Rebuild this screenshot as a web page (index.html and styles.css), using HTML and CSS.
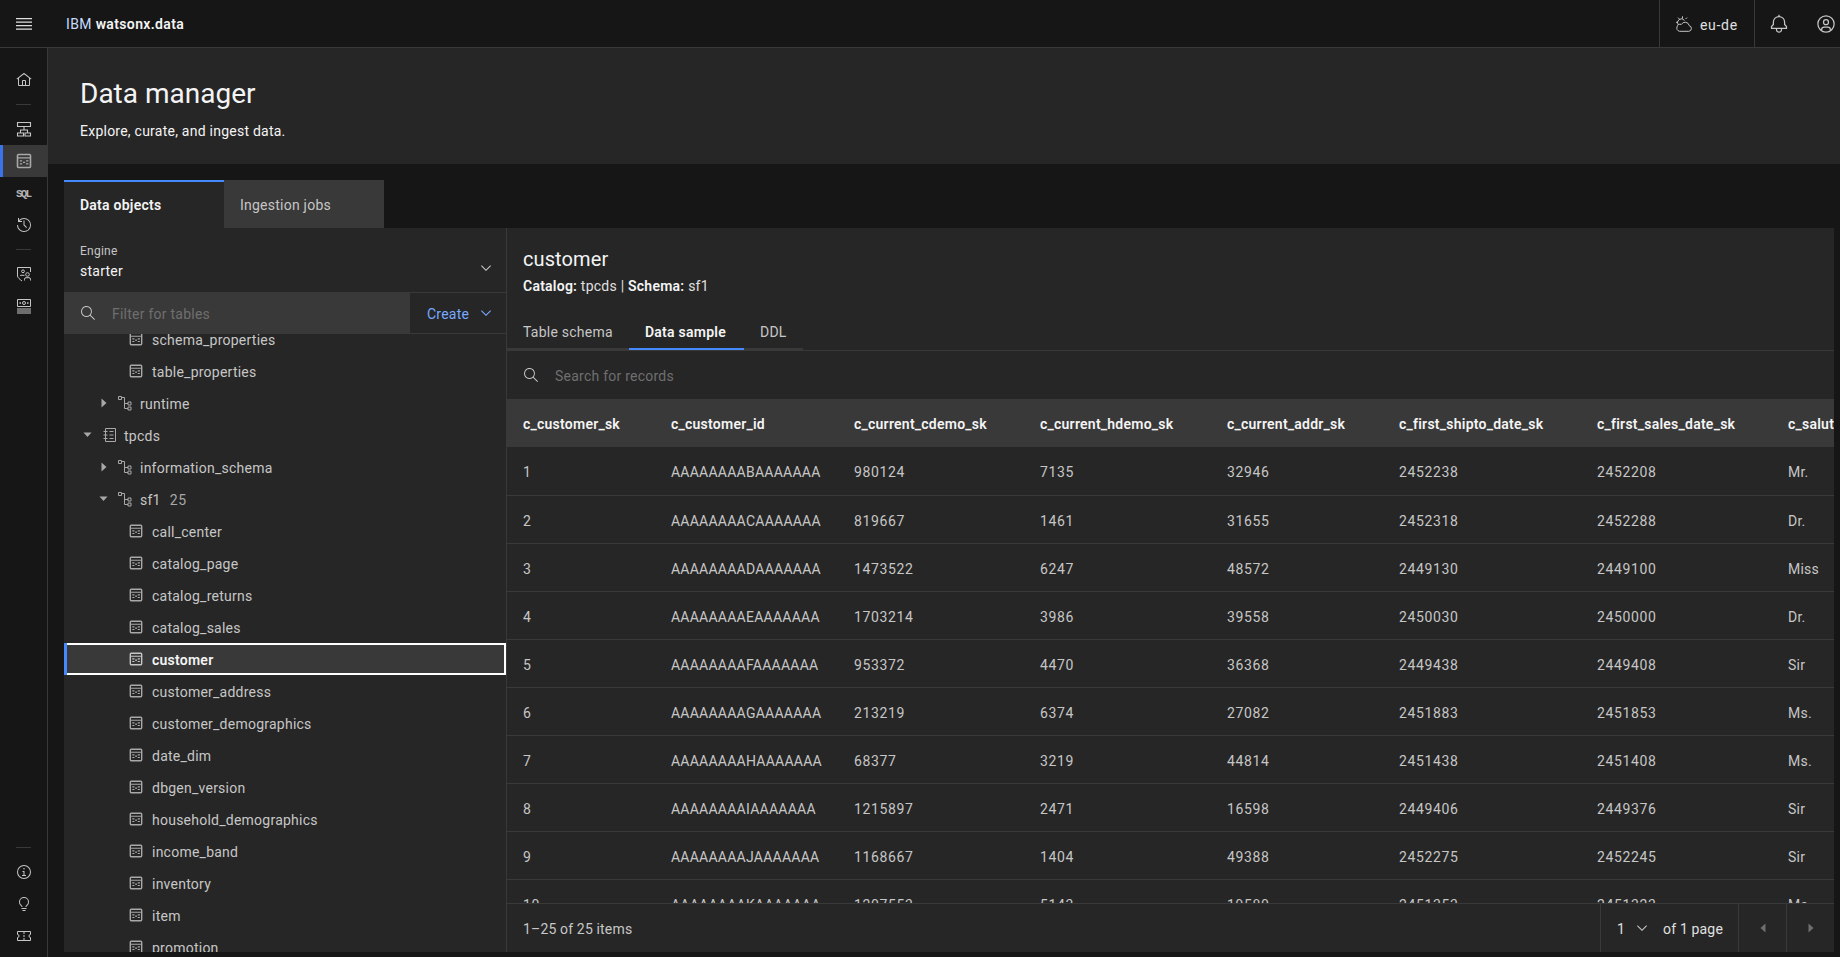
FILE: index.html
```html
<!DOCTYPE html>
<html lang="en">
<head>
<meta charset="utf-8">
<title>Data manager - IBM watsonx.data</title>
<link rel="stylesheet" href="styles.css">
</head>
<body>
<svg class="defs" aria-hidden="true">
  <symbol id="tbl" viewBox="0 0 16 16"><path fill-rule="evenodd" d="M2.500 .7h11a1.800 1.800 0 0 1 1.800 1.800v11a1.800 1.800 0 0 1-1.800 1.800h-11a1.800 1.800 0 0 1-1.800-1.800v-11A1.800 1.800 0 0 1 2.500 .7zM2.300 2.300v1.900h11.400V2.300zM2.300 5.400v8.300h11.400V5.400z"/><path d="M3.800 7.200h2.400v1.300H3.800zM3.800 10.200h2.400v1.300H3.800zM7 8.700h2.200V10H7zM10 7.200h2.400v1.300H10zM10 10.200h2.400v1.300H10z"/></symbol>
  <symbol id="tree" viewBox="0 0 16 16"><path fill="none" stroke="currentColor" d="M1.500 1.500h3v3h-3zM4.500 2.500H7.500V13.500H11M7.500 8.500H11M11 7h3v3h-3zM11 12h3v3h-3z"/></symbol>
  <symbol id="book" viewBox="0 0 16 16"><path fill="none" stroke="currentColor" d="M3.500 1.500h10v13h-10zM1.500 4.500h4M1.500 8h4M1.500 11.500h4M7.500 4.500h4M7.500 8h4M7.500 11.500h4"/></symbol>
  <symbol id="caret-r" viewBox="0 0 16 16"><path d="M5.500 3.500 10.500 8l-5 4.500z"/></symbol>
  <symbol id="caret-l" viewBox="0 0 16 16"><path d="M10.500 3.500 5.500 8l5 4.500z"/></symbol>
  <symbol id="caret-d" viewBox="0 0 16 16"><path d="M3.500 5.500h8l-4 4.500z"/></symbol>
  <symbol id="chev" viewBox="0 0 16 16"><path d="M8 11L3 6 3.700 5.300 8 9.600 12.300 5.300 13 6z"/></symbol>
  <symbol id="search" viewBox="0 0 16 16"><path d="M15,14.300L10.700,10c1.900-2.300,1.600-5.800-0.700-7.700S4.200,0.700,2.300,3S0.700,8.800,3,10.700c2,1.700,5,1.700,7,0l4.300,4.300L15,14.300z M2,6.500C2,4,4,2,6.500,2S11,4,11,6.500S9,11,6.500,11S2,9,2,6.500z"/></symbol>
  <symbol id="home" viewBox="0 0 32 32"><path d="M16.612 2.214a1.010 1.010 0 0 0-1.242 0L1 13.419l1.243 1.572L4 13.621V26a2.004 2.004 0 0 0 2 2h20a2.004 2.004 0 0 0 2-2V13.630L29.757 15 31 13.428zM18 26h-4v-8h4zm2 0v-8a2.002 2.002 0 0 0-2-2h-4a2.002 2.002 0 0 0-2 2v8H6V12.062l10-7.790 10 7.800V26z"/></symbol>
  <symbol id="deploy" viewBox="0 0 16 16"><path fill="none" stroke="currentColor" stroke-width="1.100" d="M1.500 1.500h13v4h-13zM8 5.500V9M4.500 12V9h7v3M1.500 12h6v3h-6zM9 12h5.500v3H9z"/></symbol>
  <symbol id="hist" viewBox="0 0 32 32"><path d="M20.590 22 15 16.410V7h2v8.580l5 5.010L20.590 22z"/><path d="M16 2A13.940 13.940 0 0 0 6 6.230V2H4v8h8V8H7.080A12 12 0 1 1 4 16H2A14 14 0 1 0 16 2z"/></symbol>
  <symbol id="shield" viewBox="0 0 16 16"><path fill="none" stroke="currentColor" d="M14.500 6V1.500h-13v8.500c0 1.500 2.500 3.500 4.500 5"/><circle cx="7" cy="5.300" r="1.400" fill="none" stroke="currentColor"/><path fill="none" stroke="currentColor" d="M4.500 10V9.300h4"/><circle cx="11.500" cy="8.500" r="1.800" fill="none" stroke="currentColor"/><path fill="none" stroke="currentColor" d="M8.500 14.500v-1.300a1.500 1.500 0 0 1 1.500-1.500h3a1.500 1.500 0 0 1 1.500 1.500v1.300"/></symbol>
  <symbol id="cash" viewBox="0 0 16 16"><path fill="none" stroke="currentColor" d="M1.500 1.500h13v7h-13zM1 11h14M1 13h14M1 15h14"/><circle cx="8" cy="5" r="1.500" fill="none" stroke="currentColor"/><path d="M3.500 4.200h1.500v1.600H3.500zM11 4.200h1.500v1.600H11z"/></symbol>
  <symbol id="info" viewBox="0 0 32 32"><path d="M17 22v-8h-4v2h2v6h-3v2h8v-2zM16 8a1.500 1.500 0 1 0 1.500 1.500A1.500 1.500 0 0 0 16 8z"/><path d="M16 30a14 14 0 1 1 14-14 14 14 0 0 1-14 14zm0-26a12 12 0 1 0 12 12A12 12 0 0 0 16 4z"/></symbol>
  <symbol id="idea" viewBox="0 0 32 32"><path d="M11 24h10v2H11zM13 28h6v2h-6zM16 2A10 10 0 0 0 6 12a9.190 9.190 0 0 0 3.460 7.620c1 .930 1.540 1.460 1.540 2.380h2c0-1.840-1.110-2.870-2.190-3.860A7.200 7.200 0 0 1 8 12a8 8 0 0 1 16 0 7.200 7.200 0 0 1-2.820 6.140c-1.070 1-2.180 2-2.180 3.860h2c0-.920.530-1.450 1.540-2.390A9.180 9.180 0 0 0 26 12 10 10 0 0 0 16 2z"/></symbol>
  <symbol id="ticket" viewBox="0 0 16 16"><path fill="none" stroke="currentColor" d="M1.500 3.500h13v3a1.500 1.500 0 0 0 0 3v3h-13v-3a1.500 1.500 0 0 0 0-3z"/><path d="M7.500 4h1v2h-1zM7.500 7h1v2h-1zM7.500 10h1v2h-1z"/></symbol>
  <symbol id="cloud" viewBox="0 0 16 16"><path fill="none" stroke="currentColor" d="M3.500 15.300h9.300a2.900 2.900 0 0 0 .4-5.700 4.200 4.200 0 0 0-7.800-1.200A3.500 3.500 0 0 0 3.500 15.300zM2.300 9A3.800 3.800 0 0 1 8.500 4.400M6.500 .3v2.200M2 1.600l1.400 1.400M11 1.600 9.600 3M0 6.300h2"/></symbol>
  <symbol id="bell" viewBox="0 0 32 32"><path d="M28.707 19.293 26 16.586V13a10.014 10.014 0 0 0-9-9.949V1h-2v2.051A10.014 10.014 0 0 0 6 13v3.586l-2.707 2.707A1 1 0 0 0 3 20v3a1 1 0 0 0 1 1h7v.777a5.152 5.152 0 0 0 4.500 5.199A5.006 5.006 0 0 0 21 25v-1h7a1 1 0 0 0 1-1v-3a1 1 0 0 0-.293-.707zM19 25a3 3 0 0 1-6 0v-1h6zm8-3H5v-1.586L7.707 17.707A1 1 0 0 0 8 17v-4a8 8 0 0 1 16 0v4a1 1 0 0 0 .293.707L27 20.414z"/></symbol>
  <symbol id="user" viewBox="0 0 32 32"><path d="M16 8a5 5 0 1 0 5 5 5 5 0 0 0-5-5zm0 8a3 3 0 1 1 3-3 3.003 3.003 0 0 1-3 3z"/><path d="M16 2a14 14 0 1 0 14 14A14.016 14.016 0 0 0 16 2zm-6 24.377V25a3.003 3.003 0 0 1 3-3h6a3.003 3.003 0 0 1 3 3v1.377a11.899 11.899 0 0 1-12 0zm13.993-1.451A5.002 5.002 0 0 0 19 20h-6a5.002 5.002 0 0 0-4.992 4.926 12 12 0 1 1 15.985 0z"/></symbol>
  <symbol id="menu" viewBox="0 0 16 12"><path d="M0 0h16v1.300H0zM0 3.400h16v1.300H0zM0 6.900h16v1.300H0zM0 10.500h16v1.300H0z"/></symbol>
</svg>

<header class="topbar">
  <div class="top-left">
    <svg class="menu-icon"><use href="#menu"/></svg>
    <span class="brand">IBM <b>watsonx.data</b></span>
  </div>
  <div class="top-right">
    <div class="region"><svg class="i16"><use href="#cloud"/></svg><span>eu-de</span></div>
    <div class="top-btn bell"><svg class="i20"><use href="#bell"/></svg></div>
    <div class="top-btn"><svg class="i20"><use href="#user"/></svg></div>
  </div>
</header>

<div class="shell">
  <nav class="rail">
    <div class="rail-group">
      <a class="rail-item"><svg class="i16"><use href="#home"/></svg></a>
      <div class="rail-div"></div>
      <a class="rail-item"><svg class="i16"><use href="#deploy"/></svg></a>
      <a class="rail-item on"><svg class="i16"><use href="#tbl"/></svg></a>
      <a class="rail-item"><span class="sql">SQL</span></a>
      <a class="rail-item"><svg class="i16"><use href="#hist"/></svg></a>
      <div class="rail-div"></div>
      <a class="rail-item"><svg class="i16"><use href="#shield"/></svg></a>
      <a class="rail-item"><svg class="i16"><use href="#cash"/></svg></a>
    </div>
    <div class="rail-group">
      <div class="rail-div"></div>
      <a class="rail-item"><svg class="i16"><use href="#info"/></svg></a>
      <a class="rail-item"><svg class="i16"><use href="#idea"/></svg></a>
      <a class="rail-item"><svg class="i16"><use href="#ticket"/></svg></a>
    </div>
  </nav>

  <main class="content">
    <section class="page-head">
      <h1>Data manager</h1>
      <p>Explore, curate, and ingest data.</p>
    </section>

    <section class="work">
      <div class="main-tabs">
        <div class="main-tab on">Data objects</div>
        <div class="main-tab">Ingestion jobs</div>
      </div>
      <div class="panel">
        <aside class="left">
          <div class="engine">
            <div>
              <div class="engine-label">Engine</div>
              <div class="engine-value">starter</div>
            </div>
            <svg class="i16 light"><use href="#chev"/></svg>
          </div>
          <div class="filter">
            <div class="filter-box">
              <svg class="i16 light"><use href="#search"/></svg>
              <input class="field" type="text" placeholder="Filter for tables">
            </div>
            <div class="create"><span>Create</span><svg class="i16"><use href="#chev"/></svg></div>
          </div>
          <div class="tree-wrap">
            <ul class="tree">
              <li class="node t"><svg class="i14"><use href="#tbl"/></svg>schema_properties</li>
              <li class="node t"><svg class="i14"><use href="#tbl"/></svg>table_properties</li>
              <li class="node s"><svg class="i16 car"><use href="#caret-r"/></svg><svg class="i16"><use href="#tree"/></svg>runtime</li>
              <li class="node c"><svg class="i16 car"><use href="#caret-d"/></svg><svg class="i16"><use href="#book"/></svg>tpcds</li>
              <li class="node s"><svg class="i16 car"><use href="#caret-r"/></svg><svg class="i16"><use href="#tree"/></svg>information_schema</li>
              <li class="node s"><svg class="i16 car"><use href="#caret-d"/></svg><svg class="i16"><use href="#tree"/></svg>sf1<span class="count">25</span></li>
              <li class="node t"><svg class="i14"><use href="#tbl"/></svg>call_center</li>
              <li class="node t"><svg class="i14"><use href="#tbl"/></svg>catalog_page</li>
              <li class="node t"><svg class="i14"><use href="#tbl"/></svg>catalog_returns</li>
              <li class="node t"><svg class="i14"><use href="#tbl"/></svg>catalog_sales</li>
              <li class="node t sel"><svg class="i14"><use href="#tbl"/></svg>customer</li>
              <li class="node t"><svg class="i14"><use href="#tbl"/></svg>customer_address</li>
              <li class="node t"><svg class="i14"><use href="#tbl"/></svg>customer_demographics</li>
              <li class="node t"><svg class="i14"><use href="#tbl"/></svg>date_dim</li>
              <li class="node t"><svg class="i14"><use href="#tbl"/></svg>dbgen_version</li>
              <li class="node t"><svg class="i14"><use href="#tbl"/></svg>household_demographics</li>
              <li class="node t"><svg class="i14"><use href="#tbl"/></svg>income_band</li>
              <li class="node t"><svg class="i14"><use href="#tbl"/></svg>inventory</li>
              <li class="node t"><svg class="i14"><use href="#tbl"/></svg>item</li>
              <li class="node t"><svg class="i14"><use href="#tbl"/></svg>promotion</li>
            </ul>
          </div>
        </aside>

        <section class="right">
          <div class="detail-head">
            <h2>customer</h2>
            <p><b>Catalog:</b> tpcds | <b>Schema:</b> sf1</p>
          </div>
          <div class="sub-tabs">
            <div class="sub-tab st1">Table schema</div>
            <div class="sub-tab st2 on">Data sample</div>
            <div class="sub-tab st3">DDL</div>
          </div>
          <div class="search">
            <svg class="i16 light"><use href="#search"/></svg>
            <input class="field" type="text" placeholder="Search for records">
          </div>
          <div class="table-wrap">
            <table class="data">
              <thead>
                <tr>
                  <th class="c1">c_customer_sk</th><th class="c2">c_customer_id</th><th class="c3">c_current_cdemo_sk</th><th class="c4">c_current_hdemo_sk</th><th class="c5">c_current_addr_sk</th><th class="c6">c_first_shipto_date_sk</th><th class="c7">c_first_sales_date_sk</th><th class="c8">c_salutation</th>
                </tr>
              </thead>
              <tbody>
                <tr><td>1</td><td>AAAAAAAABAAAAAAA</td><td>980124</td><td>7135</td><td>32946</td><td>2452238</td><td>2452208</td><td>Mr.</td></tr>
                <tr><td>2</td><td>AAAAAAAACAAAAAAA</td><td>819667</td><td>1461</td><td>31655</td><td>2452318</td><td>2452288</td><td>Dr.</td></tr>
                <tr><td>3</td><td>AAAAAAAADAAAAAAA</td><td>1473522</td><td>6247</td><td>48572</td><td>2449130</td><td>2449100</td><td>Miss</td></tr>
                <tr><td>4</td><td>AAAAAAAAEAAAAAAA</td><td>1703214</td><td>3986</td><td>39558</td><td>2450030</td><td>2450000</td><td>Dr.</td></tr>
                <tr><td>5</td><td>AAAAAAAAFAAAAAAA</td><td>953372</td><td>4470</td><td>36368</td><td>2449438</td><td>2449408</td><td>Sir</td></tr>
                <tr><td>6</td><td>AAAAAAAAGAAAAAAA</td><td>213219</td><td>6374</td><td>27082</td><td>2451883</td><td>2451853</td><td>Ms.</td></tr>
                <tr><td>7</td><td>AAAAAAAAHAAAAAAA</td><td>68377</td><td>3219</td><td>44814</td><td>2451438</td><td>2451408</td><td>Ms.</td></tr>
                <tr><td>8</td><td>AAAAAAAAIAAAAAAA</td><td>1215897</td><td>2471</td><td>16598</td><td>2449406</td><td>2449376</td><td>Sir</td></tr>
                <tr><td>9</td><td>AAAAAAAAJAAAAAAA</td><td>1168667</td><td>1404</td><td>49388</td><td>2452275</td><td>2452245</td><td>Sir</td></tr>
                <tr><td>10</td><td>AAAAAAAAKAAAAAAA</td><td>1207553</td><td>5143</td><td>19580</td><td>2451353</td><td>2451323</td><td>Ms.</td></tr>
              </tbody>
            </table>
          </div>
          <footer class="pager">
            <div class="pager-count">1–25 of 25 items</div>
            <div class="pager-pages"><span>1</span><svg class="i16 light"><use href="#chev"/></svg><span class="pager-of">of 1 page</span></div>
            <div class="pager-btn"><svg class="i16"><use href="#caret-l"/></svg></div>
            <div class="pager-btn"><svg class="i16"><use href="#caret-r"/></svg></div>
          </footer>
        </section>
      </div>
    </section>
  </main>
</div>
</body>
</html>
```
FILE: styles.css
```css
* { box-sizing: border-box; }
html, body { margin: 0; height: 100%; overflow: hidden; }
body {
  display: flex; flex-direction: column;
  background: #161616; color: #f4f4f4;
  font: 14px/20px Roboto, "Liberation Sans", sans-serif;
  letter-spacing: .24px;
}
h1, h2, p, ul { margin: 0; padding: 0; }
.defs { position: absolute; width: 0; height: 0; }
svg { fill: currentColor; flex: none; display: block; }
.i14 { width: 14px; height: 14px; }
.i16 { width: 16px; height: 16px; }
.i20 { width: 20px; height: 20px; }
.light { color: #c6c6c6; }

.topbar {
  flex: none; height: 48px; display: flex; justify-content: space-between;
  border-bottom: 1px solid #393939; overflow: hidden;
}
.top-left { display: flex; align-items: center; padding-left: 16px; }
.menu-icon { width: 16px; height: 12px; color: #e0e0e0; }
.brand { margin-left: 34px; color: #c6dcff; letter-spacing: .36px; }
.brand b { font-weight: 600; color: #f4f4f4; }
.top-right { display: flex; margin-right: -10px; }
.region {
  width: 95px; display: flex; align-items: center; gap: 8px; padding-left: 16px;
  border-left: 1px solid #393939; color: #c6c6c6;
}
.region span { color: #e0e0e0; letter-spacing: .7px; padding-top: 2px; }
.top-btn { width: 48px; display: flex; align-items: center; justify-content: center; color: #c6c6c6; }
.top-btn.bell { border-left: 1px solid #393939; }

.shell { flex: 1; display: flex; min-height: 0; }
.rail {
  flex: none; width: 48px; border-right: 1px solid #393939; padding: 16px 0 5px;
  display: flex; flex-direction: column; justify-content: space-between;
}
.rail-item { display: flex; align-items: center; height: 32px; padding-left: 16px; color: #c6c6c6; }
.rail-item.on { background: #393939; box-shadow: inset 3px 0 #3a74e8; color: #a8a8a8; }
.rail-div { height: 1px; margin: 8px 16px; width: 15px; background: #393939; }
.sql { font: 700 11px/16px "Liberation Mono", monospace; letter-spacing: -1.8px; color: #b4b4b4; padding-top: 1px; }

.content { flex: 1; min-width: 0; display: flex; flex-direction: column; }
.page-head { flex: none; height: 116px; background: #262626; padding: 24px 32px 0; }
.page-head h1 { font-size: 28px; line-height: 44px; font-weight: 400; letter-spacing: 0; }
.page-head p { margin-top: 5px; }

.work { flex: 1; min-height: 0; display: flex; flex-direction: column; padding: 16px 6px 5px 16px; }
.main-tabs { flex: none; display: flex; }
.main-tab {
  width: 160px; height: 48px; padding: 15px 16px 0; background: #393939; color: #c6c6c6;
}
.main-tab.on { background: #262626; box-shadow: inset 0 2px #4589ff; color: #f4f4f4; font-weight: 600; }

.panel { flex: 1; min-height: 0; display: flex; background: #262626; }
.left {
  flex: none; width: 443px; border-right: 1px solid #393939;
  display: flex; flex-direction: column; min-height: 0;
}
.engine {
  flex: none; height: 65px; padding: 15px 12px 0 16px; display: flex; justify-content: space-between; align-items: flex-start;
  border-bottom: 1px solid #393939;
}
.engine svg { margin-top: 17px; }
.engine-label { font-size: 12px; line-height: 16px; color: #c6c6c6; }
.engine-value { margin-top: 2px; line-height: 20px; }
.filter { flex: none; height: 41px; display: flex; border-bottom: 1px solid #393939; }
.filter-box { flex: 1; display: flex; align-items: center; gap: 16px; padding-left: 16px; background: #393939; }
.field {
  flex: 1; min-width: 0; border: 0; outline: 0; background: transparent; padding: 2px 0 0;
  color: #f4f4f4; font: inherit; letter-spacing: inherit;
}
.field::placeholder { color: #6f6f6f; opacity: 1; }
.create {
  flex: none; width: 96px; display: flex; align-items: center; justify-content: space-between;
  padding: 0 12px 0 17px; color: #78a9ff;
}
.create span { padding-top: 2px; }
.tree-wrap { flex: 1; min-height: 0; overflow: hidden; }
.tree { list-style: none; margin-top: -11px; color: #c6c6c6; }
.node { height: 32px; display: flex; align-items: center; padding-top: 2px; }
.node svg { color: #a8a8a8; margin-top: -2px; }
.node.t { padding-left: 65px; gap: 9px; }
.node.s { padding-left: 32px; }
.node.s .car { margin-right: 5px; }
.node.s svg + svg { margin-right: 7px; }
.node.c { padding-left: 16px; }
.node.c .car { margin-right: 6px; }
.node.c svg + svg { margin-right: 6px; }
.count { margin-left: 9px; color: #a8a8a8; letter-spacing: .65px; }
.node.sel {
  background: #393939; color: #f4f4f4; font-weight: 600;
  box-shadow: inset 3px 0 #4589ff, inset 0 0 0 2px #fff;
}
.node.sel svg { color: #c6c6c6; }

.right { flex: 1; min-width: 0; display: flex; flex-direction: column; }
.detail-head { flex: none; height: 84px; padding: 17px 16px 0; }
.detail-head h2 { font-size: 20px; line-height: 28px; font-weight: 400; letter-spacing: .1px; }
.detail-head p { margin-top: 3px; color: #e0e0e0; }
.detail-head b { font-weight: 600; color: #f4f4f4; }
.sub-tabs { flex: none; height: 39px; display: flex; border-bottom: 1px solid #393939; }
.sub-tab {
  height: 38px; padding: 10px 16px 0; color: #c6c6c6; box-shadow: inset 0 -2px #393939; white-space: nowrap;
}
.st1 { width: 122px; } .st2 { width: 115px; } .st3 { width: 59px; }
.sub-tab.on { color: #f4f4f4; font-weight: 600; box-shadow: inset 0 -2px #4589ff; }
.search { flex: none; height: 48px; display: flex; align-items: center; gap: 16px; padding-left: 16px; }

.table-wrap { flex: 1; min-height: 0; overflow: hidden; }
.data { table-layout: fixed; width: 1465px; border-collapse: separate; border-spacing: 0; }
.data th, .data td { height: 48px; padding: 2px 16px 0; text-align: left; white-space: nowrap; }
.data th { background: #393939; color: #f4f4f4; font-weight: 600; }
.data td { color: #c6c6c6; }
.data td:first-child, .data td:nth-child(n+3):nth-child(-n+7) { letter-spacing: .65px; }
.data tbody tr + tr td { border-top: 1px solid #393939; }
.c1 { width: 148px; } .c2 { width: 183px; } .c3 { width: 186px; } .c4 { width: 187px; }
.c5 { width: 172px; } .c6 { width: 198px; } .c7 { width: 191px; } .c8 { width: 200px; }

.pager { flex: none; height: 49px; display: flex; align-items: center; border-top: 1px solid #393939; }
.pager-count { flex: 1; padding: 2px 0 0 16px; color: #c6c6c6; letter-spacing: .16px; }
.pager-pages {
  height: 100%; width: 138px; display: flex; align-items: center; padding-left: 16px;
  border-left: 1px solid #393939; color: #e0e0e0;
}
.pager-pages span { padding-top: 2px; }
.pager-pages svg { margin-left: 9px; }
.pager-of { margin-left: 13px; letter-spacing: .16px; }
.pager-btn {
  width: 48px; height: 100%; display: flex; align-items: center; justify-content: center;
  border-left: 1px solid #393939; color: #6f6f6f;
}
```
